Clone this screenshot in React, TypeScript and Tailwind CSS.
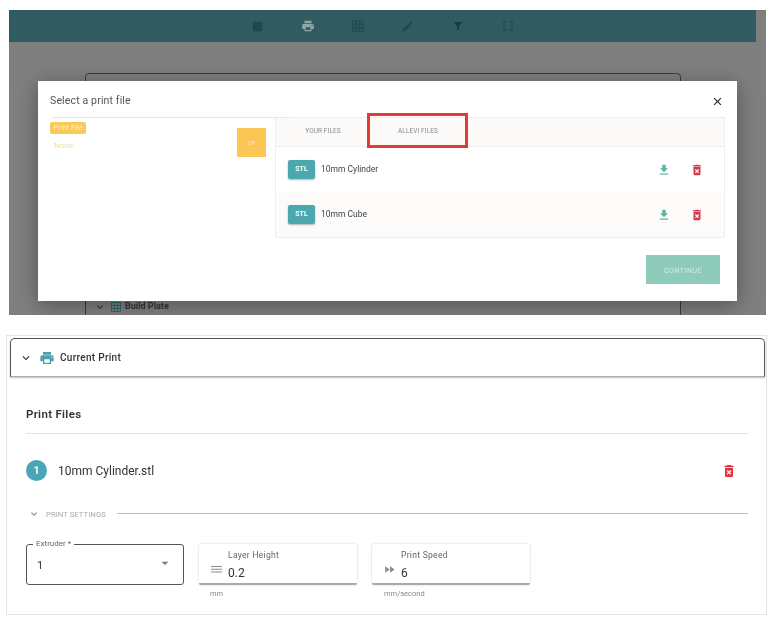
import {
  MdClose,
  MdDataArray,
  MdDehaze,
  MdDeleteForever,
  MdEdit,
  MdExpandMore,
  MdFastForward,
  MdFileDownload,
  MdFilterAlt,
  MdGridOn,
  MdPrint,
  MdArrowDropDown,
  MdStop,
} from 'react-icons/md';

function FileRow({ name, tinted }: { name: string; tinted?: boolean }) {
  return (
    <div
      className={`flex h-[45px] items-center pl-[12px] pr-[20px] ${tinted ? 'bg-[#fdfbfa]' : 'bg-white'}`}
    >
      <div className="flex h-[19px] w-[27px] items-center justify-center rounded-[2px] bg-[#4ba8ae] text-[7px] font-bold text-white shadow-[0_1px_2px_rgba(0,0,0,0.3)]">
        STL
      </div>
      <span className="ml-[6px] flex-1 text-[8.5px] text-[#444]">{name}</span>
      <MdFileDownload className="text-[14px] text-[#5db5a4]" />
      <MdDeleteForever className="ml-[19px] text-[14px] text-[#d8344a]" />
    </div>
  );
}

function NumberField({
  label,
  value,
  unit,
  icon,
  unitIndent,
}: {
  label: string;
  value: string;
  unit: string;
  icon: React.ReactNode;
  unitIndent: string;
}) {
  return (
    <div className="w-[158px]">
      <div className="flex h-[41px] rounded-[2px] border-b-2 border-[#aaa] bg-white pl-[11px] shadow-[0_0_2px_rgba(0,0,0,0.25)]">
        <div className="flex w-[18px] items-end pb-[7px] text-[#8c8c8c]">
          {icon}
        </div>
        <div className="flex flex-col pt-[6px]">
          <span className="text-[8.5px] leading-[10px] tracking-[0.3px] text-[#666]">
            {label}
          </span>
          <span className="mt-[6px] text-[12px] leading-[14px] text-[#333]">
            {value}
          </span>
        </div>
      </div>
      <div className={`mt-[4px] text-[7.5px] leading-[10px] text-[#888] ${unitIndent}`}>
        {unit}
      </div>
    </div>
  );
}

export default function App() {
  return (
    <div className="h-[631px] w-[776px] overflow-hidden bg-white pt-[10px] font-['Roboto',sans-serif] blur-[0.4px]">
      {/* dimmed page with the file dialog on top */}
      <section className="relative ml-[9px] h-[305px] w-[757px] overflow-hidden bg-[#7f7f7f]">
        <div className="flex h-[32px] w-[747px] items-center justify-center bg-[#2f5b61] text-[#1f4b50]">
          <div className="flex w-[50px] justify-center">
            <MdStop className="text-[19px] text-[#184a50]" />
          </div>
          <div className="flex w-[50px] justify-center">
            <MdPrint className="text-[14px] text-[#8fa6a8]" />
          </div>
          <div className="flex w-[50px] justify-center">
            <MdGridOn className="text-[14px]" />
          </div>
          <div className="flex w-[50px] justify-center">
            <MdEdit className="text-[13px]" />
          </div>
          <div className="flex w-[50px] justify-center">
            <MdFilterAlt className="text-[12px] text-[#153f44]" />
          </div>
          <div className="flex w-[50px] justify-center">
            <MdDataArray className="text-[14px]" />
          </div>
        </div>
        <div className="ml-[76px] mt-[31px] h-[260px] w-[596px] rounded-t-[4px] border border-[#3c3c3c] bg-[#7f7f7f]">
          <div className="mt-[226px] flex items-center pl-[8px] text-[9px] font-bold text-[#333]">
            <MdExpandMore className="text-[12px]" />
            <MdGridOn className="ml-[4px] text-[12px] text-[#2f6a6e]" />
            <span className="ml-[3px]">Build Plate</span>
          </div>
        </div>

        <div className="absolute left-[29px] top-[71px] h-[220px] w-[699px] bg-white shadow-[0_4px_20px_rgba(0,0,0,0.35)]">
          <div className="flex h-[36px] items-center justify-between pl-[12px] pr-[13px] pt-[4px]">
            <span className="text-[10.5px] tracking-[0.15px] text-[#555]">
              Select a print file
            </span>
            <MdClose className="text-[13px] text-[#222]" />
          </div>
          <div className="flex">
            <div className="relative ml-[14px] mr-[-14px] h-[121px] w-[237px] border-t border-[#e6e6e6]">
              <span className="absolute left-[-2px] top-[4px] flex h-[12px] w-[36px] items-center justify-center rounded-[2px] bg-[#fbc95a] text-[7.5px] text-[#fff3d0]">
                Print File
              </span>
              <span className="absolute left-[2px] top-[22px] text-[8px] text-[#e9dd9a]">
                None
              </span>
              <div className="absolute left-[185px] top-[10px] flex h-[29px] w-[29px] items-center justify-center bg-[#fcc654] text-[6px] text-[#fde9b8]">
                UP
              </div>
            </div>
            <div className="h-[121px] w-[450px] border border-[#eeeeee]">
              <div className="flex h-[29px] items-center border-b border-[#eeeeee] bg-[#fbfaf9] text-[6.5px] tracking-[0.1px] text-[#8a8a8a]">
                <span className="w-[94px] text-center">YOUR FILES</span>
                <span className="w-[96px] text-center">ALLEVI FILES</span>
              </div>
              <FileRow name="10mm Cylinder" />
              <FileRow name="10mm Cube" tinted />
            </div>
          </div>
          <div className="mr-[17px] mt-[17px] flex justify-end">
            <button className="h-[29px] w-[74px] bg-[#8fcbbb] pt-[3px] text-[7px] tracking-[0.5px] text-[#d5eee7]">
              CONTINUE
            </button>
          </div>
        </div>

        <div className="absolute left-[358px] top-[103px] h-[35px] w-[101px] border-[3px] border-[#e53a32]" />
      </section>

      {/* current print panel */}
      <section className="ml-[6px] mt-[20px] h-[280px] w-[761px] border border-[#e6e6e6] pt-[2px]">
        <div className="ml-[3px] flex h-[39px] w-[755px] items-center rounded-t-[5px] border border-[#555] border-b-[#aaa] pl-[8px] shadow-[0_1px_2px_rgba(0,0,0,0.25)]">
          <MdExpandMore className="text-[14px] text-[#333]" />
          <MdPrint className="ml-[6px] text-[16px] text-[#4ba0ad]" />
          <span className="ml-[5px] text-[10px] font-medium tracking-[0.3px] text-[#333]">
            Current Print
          </span>
        </div>

        <div className="px-[19px]">
          <h2 className="mt-[30px] text-[11.5px] font-semibold leading-[14px] tracking-[0.3px] text-[#333]">
            Print Files
          </h2>
          <div className="mt-[12px] h-px w-[722px] bg-[#e3e3e3]" />

          <div className="mt-[26px] flex w-[722px] items-center">
            <div className="flex h-[21px] w-[21px] items-center justify-center rounded-full bg-[#4aa6b5] text-[10px] font-bold text-white">
              1
            </div>
            <span className="ml-[11px] flex-1 text-[12px] text-[#333]">
              10mm Cylinder.stl
            </span>
            <MdDeleteForever className="mr-[11px] text-[16px] text-[#e5323f]" />
          </div>

          <div className="mt-[26px] flex w-[722px] items-center">
            <MdExpandMore className="ml-[2px] mt-[1px] text-[12px] text-[#888]" />
            <span className="ml-[6px] mt-[2px] text-[7.8px] text-[#aaa]">PRINT SETTINGS</span>
            <div className="ml-[11px] h-px flex-1 bg-[#bdbdbd]" />
          </div>

          <div className="mt-[23px] flex gap-[15px]">
            <div className="relative flex h-[41px] w-[158px] items-center justify-between rounded-[3px] border border-[#555] pl-[10px] pr-[10px]">
              <span className="absolute left-[6px] top-[-6px] bg-white px-[3px] text-[8px] leading-[10px] text-[#666]">
                Extruder *
              </span>
              <span className="mt-[4px] text-[11px] text-[#333]">1</span>
              <MdArrowDropDown className="mb-[3px] text-[16px] text-[#777]" />
            </div>
            <NumberField
              label="Layer Height"
              value="0.2"
              unit="mm"
              unitIndent="pl-[11px]"
              icon={<MdDehaze className="text-[13px]" />}
            />
            <NumberField
              label="Print Speed"
              value="6"
              unit="mm/second"
              unitIndent="pl-[12px]"
              icon={<MdFastForward className="text-[13px]" />}
            />
          </div>
        </div>
      </section>
    </div>
  );
}
